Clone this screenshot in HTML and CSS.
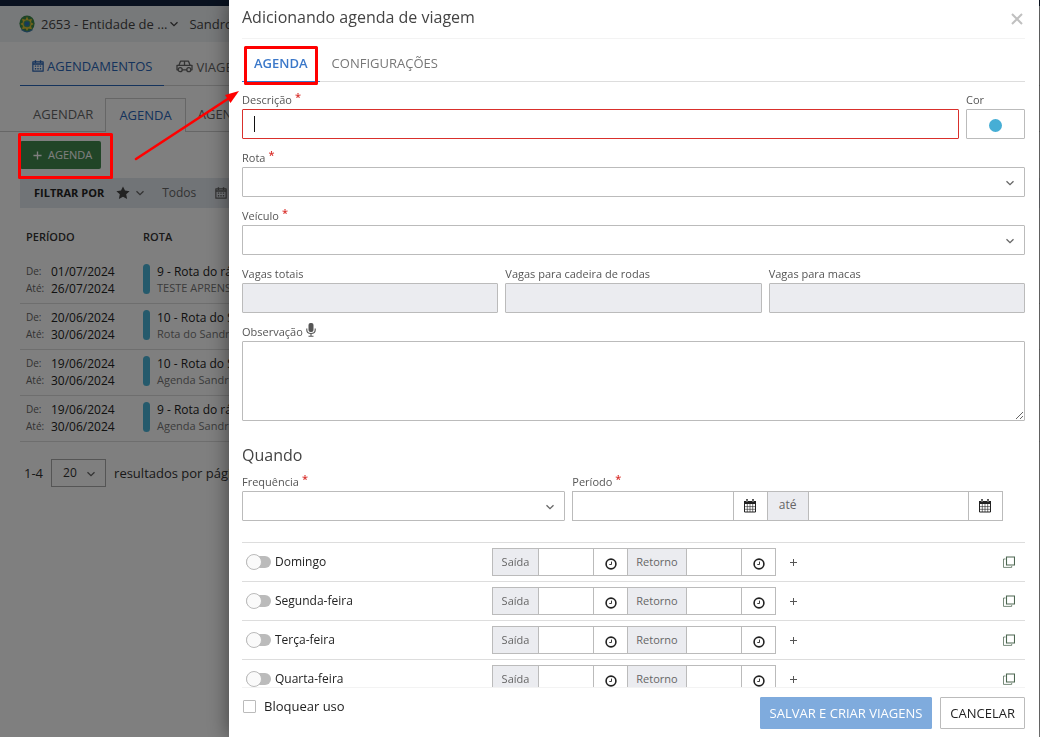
FILE: index.html
```html
<!DOCTYPE html>
<html lang="pt-BR">
<head>
<meta charset="utf-8">
<title>Agenda de viagem</title>
<link rel="stylesheet" href="styles.css">
</head>
<body>
<svg class="sprite" aria-hidden="true">
  <symbol id="chevron" viewBox="0 0 10 10"><path d="M1.5 3.2 5 6.7 8.5 3.2" fill="none" stroke="currentColor" stroke-width="1.3"/></symbol>
  <symbol id="cal" viewBox="0 0 14 14"><path d="M1 2.2h12V13H1z" fill="none" stroke="currentColor" stroke-width="1.4" stroke-linejoin="round"/><path d="M1 4.7h12M4 .4v3M10 .4v3" stroke="currentColor" stroke-width="1.6"/><path d="M3.3 7.2h1.6M6.2 7.2h1.6M9.1 7.2h1.6M3.3 10.2h1.6M6.2 10.2h1.6M9.1 10.2h1.6" stroke="currentColor" stroke-width="1.5"/></symbol>
  <symbol id="calgrid" viewBox="0 0 13 14"><path d="M1 2.5h11V13H1z" fill="#fff" stroke="currentColor"/><path d="M.5 2h12v3H.5z" fill="currentColor"/><path d="M3.5 .3v3M9.5 .3v3" stroke="currentColor" stroke-width="2"/><path d="M3.5 1v2M9.5 1v2" stroke="#fff" stroke-width=".7"/><path d="M3.8 5v8M6.5 5v8M9.2 5v8M1 7.6h11M1 10.3h11" stroke="currentColor" stroke-width=".6"/></symbol>
  <symbol id="clock" viewBox="0 0 12 12"><circle cx="6" cy="6" r="4.9" fill="none" stroke="currentColor" stroke-width="1.6"/><path d="M6.5 3.6v2.900H4.300" fill="none" stroke="currentColor" stroke-width=".9"/></symbol>
  <symbol id="copy" viewBox="0 0 12 12"><path d="M3.5 1h8v8h-8z" fill="none" stroke="currentColor" stroke-width="1.1"/><path d="M2.5 3h-2v8.4h8.2V10" fill="none" stroke="currentColor" stroke-width="1" opacity=".75"/></symbol>
</svg>

<div class="page">
  <div class="topbar"></div>
  <header class="entity">
    <svg class="crest" viewBox="0 0 16 18"><ellipse cx="8" cy="8.500" rx="7.600" ry="8" fill="#3c8a4b"/><path d="m8 1.500 1.500 3.200 3.500-1-1 3.500 2.600 1.800-2.600 1.800 1 3.400-3.500-.8L8 16l-1.500-2.600-3.500.8 1-3.400L1.400 9 4 7.200l-1-3.500 3.500 1z" fill="#e3c432"/><circle cx="8" cy="8.800" r="3.500" fill="#3f9a68"/><circle cx="8" cy="8.800" r="2.300" fill="#2d74b5"/><path d="M2.500 14.500q5.500 4.500 11 0" fill="none" stroke="#3d7fa8" stroke-width="1.500"/></svg>
    <span class="entity-name">2653 - Entidade de ...</span>
    <svg class="chev"><use href="#chevron"/></svg>
    <span class="entity-user">Sandro</span>
  </header>
  <nav class="modules">
    <a class="module active" href="#agendamentos"><svg class="ico12"><use href="#cal"/></svg>AGENDAMENTOS</a>
    <a class="module" href="#viagens"><svg class="car" viewBox="0 0 17 13"><path d="M3 5 4.500 1.200h8L14 5M1 5.300h15v4.500H1zM8.500 1.200V5" fill="none" stroke="currentColor" stroke-width="1.300" stroke-linejoin="round"/><circle cx="4.200" cy="9.700" r="2" fill="#fff" stroke="currentColor" stroke-width="1.300"/><circle cx="12.800" cy="9.700" r="2" fill="#fff" stroke="currentColor" stroke-width="1.300"/></svg>VIAGENS</a>
  </nav>
  <nav class="subtabs">
    <a class="subtab" href="#agendar">AGENDAR</a>
    <a class="subtab active" href="#agenda">AGENDA</a>
    <a class="subtab" href="#lista">AGENDAMENTOS</a>
  </nav>
  <main class="list">
    <button class="add" type="button"><svg class="plus" viewBox="0 0 10 10"><path d="M5 .5v9M.5 5h9" stroke="currentColor" stroke-width="1.500"/></svg>AGENDA</button>
    <div class="filters">
      <strong>FILTRAR POR</strong>
      <svg class="star" viewBox="0 0 14 14"><path d="m7 .4 2 4.200 4.600.6-3.400 3.100.9 4.600L7 10.700l-4.100 2.200.9-4.600L.4 5.200 5 4.600z" fill="currentColor"/></svg>
      <svg class="chev"><use href="#chevron"/></svg>
      <span class="filter-value">Todos</span>
      <svg class="ico12"><use href="#cal"/></svg>
    </div>
    <table class="agendas">
      <thead><tr><th>PERÍODO</th><th>ROTA</th></tr></thead>
      <tbody>
        <tr><td><div class="dates"><small>De:</small><span>01/07/2024</span><small>Até:</small><span>26/07/2024</span></div></td><td><div class="route"><b>9 - Rota do rápido</b><span>TESTE APRENSENTAÇÃO</span></div></td></tr>
        <tr><td><div class="dates"><small>De:</small><span>20/06/2024</span><small>Até:</small><span>30/06/2024</span></div></td><td><div class="route"><b>10 - Rota do Sandro</b><span>Rota do Sandro</span></div></td></tr>
        <tr><td><div class="dates"><small>De:</small><span>19/06/2024</span><small>Até:</small><span>30/06/2024</span></div></td><td><div class="route"><b>10 - Rota do Sandro</b><span>Agenda Sandro</span></div></td></tr>
        <tr><td><div class="dates"><small>De:</small><span>19/06/2024</span><small>Até:</small><span>30/06/2024</span></div></td><td><div class="route"><b>9 - Rota do rápido</b><span>Agenda Sandro</span></div></td></tr>
      </tbody>
    </table>
    <div class="pager">
      <span>1-4</span>
      <span class="select small"><select id="porpagina" aria-label="Resultados por página"><option>20</option></select><svg class="chev"><use href="#chevron"/></svg></span>
      <label for="porpagina">resultados por página</label>
    </div>
  </main>
</div>
<div class="backdrop"></div>

<section class="drawer" role="dialog" aria-labelledby="titulo">
  <header class="drawer-head">
    <h1 id="titulo">Adicionando agenda de viagem</h1>
    <button class="close" type="button" aria-label="Fechar"><svg viewBox="0 0 12 12"><path d="m1 1 10 10M11 1 1 11" stroke="currentColor" stroke-width="2"/></svg></button>
  </header>
  <div class="drawer-body">
    <nav class="tabs">
      <a class="tab active" href="#tab-agenda">AGENDA</a>
      <a class="tab" href="#tab-config">CONFIGURAÇÕES</a>
    </nav>
    <form class="form">
      <div class="row with-color">
        <div class="field"><label for="descricao">Descrição <i>*</i></label><div class="stack"><input class="control invalid" id="descricao" type="text"><span class="caret"></span></div></div>
        <div class="field"><label for="cor">Cor</label><button class="control color" id="cor" type="button" aria-label="Cor"><span></span></button></div>
      </div>
      <div class="field"><label for="rota">Rota <i>*</i></label><div class="select"><select class="control" id="rota"><option></option></select><svg class="chev"><use href="#chevron"/></svg></div></div>
      <div class="field"><label for="veiculo">Veículo <i>*</i></label><div class="select"><select class="control" id="veiculo"><option></option></select><svg class="chev"><use href="#chevron"/></svg></div></div>
      <div class="row thirds">
        <div class="field"><label for="vagas">Vagas totais</label><input class="control" id="vagas" disabled></div>
        <div class="field"><label for="cadeira">Vagas para cadeira de rodas</label><input class="control" id="cadeira" disabled></div>
        <div class="field"><label for="macas">Vagas para macas</label><input class="control" id="macas" disabled></div>
      </div>
      <div class="field"><label for="obs">Observação <svg class="mic" viewBox="0 0 10 14"><rect x="2.500" y="0" width="5" height="9" rx="2" fill="currentColor"/><path d="M.8 5.500V7q0 3.500 4.200 3.500T9.200 7V5.500M5 10.500V13M2.500 13.300h5" fill="none" stroke="currentColor" stroke-width="1.100"/></svg></label><textarea class="control area" id="obs"></textarea></div>
      <h2>Quando</h2>
      <div class="row when">
        <div class="field"><label for="freq">Frequência <i>*</i></label><div class="select"><select class="control" id="freq"><option></option></select><svg class="chev"><use href="#chevron"/></svg></div></div>
        <div class="field"><label for="inicio">Período <i>*</i></label>
          <div class="group period">
            <input id="inicio" type="text"><button type="button" aria-label="Data inicial"><svg class="ico14"><use href="#calgrid"/></svg></button><span class="addon">até</span><input type="text" aria-label="Data final"><button type="button" aria-label="Data final, calendário"><svg class="ico14"><use href="#calgrid"/></svg></button>
          </div>
        </div>
      </div>
      <div class="days">
        <div class="day"><label class="switch"><input type="checkbox"><span>Domingo</span></label>
          <div class="group times"><label class="addon" for="s1">Saída</label><input id="s1"><button type="button" aria-label="Hora de saída"><svg class="ico12"><use href="#clock"/></svg></button><label class="addon" for="r1">Retorno</label><input id="r1"><button type="button" aria-label="Hora de retorno"><svg class="ico12"><use href="#clock"/></svg></button></div>
          <button class="more" type="button" aria-label="Adicionar horário"><svg viewBox="0 0 7 7"><path d="M3.500 0v7M0 3.500h7" stroke="currentColor"/></svg></button><button class="copy" type="button" aria-label="Copiar"><svg class="ico12"><use href="#copy"/></svg></button></div>
        <div class="day"><label class="switch"><input type="checkbox"><span>Segunda-feira</span></label>
          <div class="group times"><label class="addon" for="s2">Saída</label><input id="s2"><button type="button" aria-label="Hora de saída"><svg class="ico12"><use href="#clock"/></svg></button><label class="addon" for="r2">Retorno</label><input id="r2"><button type="button" aria-label="Hora de retorno"><svg class="ico12"><use href="#clock"/></svg></button></div>
          <button class="more" type="button" aria-label="Adicionar horário"><svg viewBox="0 0 7 7"><path d="M3.500 0v7M0 3.500h7" stroke="currentColor"/></svg></button><button class="copy" type="button" aria-label="Copiar"><svg class="ico12"><use href="#copy"/></svg></button></div>
        <div class="day"><label class="switch"><input type="checkbox"><span>Terça-feira</span></label>
          <div class="group times"><label class="addon" for="s3">Saída</label><input id="s3"><button type="button" aria-label="Hora de saída"><svg class="ico12"><use href="#clock"/></svg></button><label class="addon" for="r3">Retorno</label><input id="r3"><button type="button" aria-label="Hora de retorno"><svg class="ico12"><use href="#clock"/></svg></button></div>
          <button class="more" type="button" aria-label="Adicionar horário"><svg viewBox="0 0 7 7"><path d="M3.500 0v7M0 3.500h7" stroke="currentColor"/></svg></button><button class="copy" type="button" aria-label="Copiar"><svg class="ico12"><use href="#copy"/></svg></button></div>
        <div class="day"><label class="switch"><input type="checkbox"><span>Quarta-feira</span></label>
          <div class="group times"><label class="addon" for="s4">Saída</label><input id="s4"><button type="button" aria-label="Hora de saída"><svg class="ico12"><use href="#clock"/></svg></button><label class="addon" for="r4">Retorno</label><input id="r4"><button type="button" aria-label="Hora de retorno"><svg class="ico12"><use href="#clock"/></svg></button></div>
          <button class="more" type="button" aria-label="Adicionar horário"><svg viewBox="0 0 7 7"><path d="M3.500 0v7M0 3.500h7" stroke="currentColor"/></svg></button><button class="copy" type="button" aria-label="Copiar"><svg class="ico12"><use href="#copy"/></svg></button></div>
      </div>
    </form>
  </div>
  <footer class="drawer-foot">
    <label class="block"><input type="checkbox"><span>Bloquear uso</span></label>
    <button class="btn primary" type="button">SALVAR E CRIAR VIAGENS</button>
    <button class="btn" type="button">CANCELAR</button>
  </footer>
</section>

<svg class="notes" viewBox="0 0 330 190" aria-hidden="true">
  <g fill="none" stroke="#f00" stroke-width="3" stroke-linejoin="round">
    <rect x="19.500" y="134.500" width="92" height="43"/>
    <rect x="245.500" y="47.500" width="71" height="36"/>
    <path d="m136 159 94-61.500" stroke-width="2.600" stroke-linecap="round"/>
  </g>
  <path d="m239 91-8.500 12-5.500-8z" fill="#f00"/>
</svg>
</body>
</html>
```

FILE: styles.css
```css
* { box-sizing: border-box; }
html, body { height: 100%; }
body { margin: 0; overflow: hidden; background: #fff; color: #333; font: 12px/16px "Open Sans", "Noto Sans", sans-serif; }
input, select, textarea, button { font: inherit; color: inherit; margin: 0; border-radius: 0; }
button { display: flex; align-items: center; justify-content: center; padding: 0; border: 0; background: none; }
a { color: inherit; text-decoration: none; }
svg { display: block; flex: none; }
.sprite { position: absolute; width: 0; height: 0; }
.chev { width: 10px; height: 10px; }
.ico14 { width: 14px; height: 14px; }
.ico12 { width: 12px; height: 12px; }

/* Page behind the drawer */
.page { min-height: 100%; white-space: nowrap; }
.topbar { height: 6px; background: #12233f; }
.entity { display: flex; align-items: center; height: 36px; padding-left: 19px; background: #eff2f5; font-size: 13px; color: #444; }
.crest { width: 16px; height: 18px; margin-right: 6px; }
.entity-name { margin-right: 2px; }
.entity-user { margin-left: 10px; }
.modules { display: flex; height: 44px; margin-left: 20px; padding-top: 7px; border-bottom: 1px solid #d5d5d5; font-size: 13px; color: #666; }
.module { display: flex; align-items: center; gap: 3px; height: 37px; padding: 0 12px 2px; }
.module.active { color: #2a66b8; font-weight: 500; border-bottom: 1px solid #2a66b8; }
.car { width: 17px; height: 13px; }
.subtabs { display: flex; height: 46px; padding: 12px 0 0 20px; border-bottom: 1px solid #ccc; font-size: 13px; color: #666; }
.subtab { display: flex; align-items: center; height: 34px; padding: 0 12px 3px; }
.subtab:first-child { padding-left: 13px; }
.subtab.active { padding: 0 13px 2px; color: #2a66b8; font-weight: 500; background: #fff; border: 1px solid #ccc; border-bottom: 0; }
.list { padding: 9px 0 0 20px; }
.add { justify-content: flex-start; gap: 6px; width: 81px; height: 28px; padding-left: 13px; border-radius: 2px; background: #438a4e; color: #fff; font-size: 11px; }
.plus { width: 9px; height: 9px; }
.filters { display: flex; align-items: center; height: 30px; margin-top: 9px; padding-left: 14px; background: #e3e8ee; font-size: 12px; color: #666; }
.filters strong { margin-right: 12px; font-size: 11px; color: #222; }
.star { width: 14px; height: 14px; margin-right: 5px; color: #444; }
.filter-value { margin: 0 19px 0 17px; }
.agendas { width: 100%; border-collapse: collapse; table-layout: fixed; }
.agendas th { width: 117px; height: 49px; padding: 9px 6px 1px; text-align: left; font-size: 11px; font-weight: 600; color: #333; }
.agendas th + th { width: auto; }
.agendas td { height: 46px; padding: 0 6px; border-bottom: 1px solid #ddd; }
.dates { display: grid; grid-template-columns: 25px auto; line-height: 17px; color: #222; }
.dates small { font-size: 10px; color: #666; }
.route { display: grid; grid-template-columns: 7px 1fr; column-gap: 7px; max-width: 92px; overflow: hidden; color: #222; }
.route::before { content: ""; grid-row: 1 / 3; height: 30px; border-radius: 4px; background: #4bb5d8; }
.route b { font-weight: 400; }
.route span { font-size: 11px; color: #777; }
.pager { display: flex; align-items: center; gap: 8px; margin-top: 17px; padding-left: 4px; font-size: 13px; }
.small select { width: 55px; height: 28px; padding-left: 11px; border: 1px solid #aaa; background: none; appearance: none; font-size: 12px; }
.backdrop { position: fixed; inset: 0; background: rgba(0, 0, 0, .5); }

/* Drawer */
.drawer { position: fixed; inset: 0 1px 0 229px; display: flex; flex-direction: column; padding: 0 14px 0 13px; background: #fff; box-shadow: 0 0 20px rgba(0, 0, 0, .5); }
.drawer-head { display: flex; align-items: center; justify-content: space-between; height: 39px; padding-bottom: 4px; border-bottom: 1px solid #f3f3f3; flex: none; }
h1, h2 { margin: 0; font-size: 16px; font-weight: 400; line-height: 20px; color: #444; }
.close { height: 20px; padding: 4px 2px 0; color: #c0c0c0; }
.close svg { width: 12px; height: 12px; }
.drawer-body { flex: 1; min-height: 0; overflow-y: auto; scrollbar-width: none; }
.tabs { display: flex; height: 43px; padding-top: 7px; border-bottom: 1px solid #ddd; font-size: 13px; color: #777; }
.tab { display: flex; align-items: center; height: 36px; padding: 0 12px 2px; }
.tab.active { color: #3b78c9; font-weight: 600; border-bottom: 1px solid #3b78c9; padding-bottom: 1px; }
.form { display: flex; flex-direction: column; gap: 10px; padding-top: 9px; }
.row { display: grid; gap: 7px; }
.with-color { grid-template-columns: 1fr 59px; }
.thirds { grid-template-columns: repeat(3, 1fr); }
.when { grid-template-columns: 5fr 7fr; }
.field { min-width: 0; }
.field > label { display: flex; align-items: center; gap: 3px; height: 18px; font-size: 11px; font-weight: 500; color: #555; white-space: nowrap; }
.field i { align-self: flex-start; line-height: 11px; font-style: normal; font-weight: 600; font-size: 11px; color: #d9302c; }
.mic { width: 10px; height: 14px; color: #555; margin-bottom: 4px; }
.control { display: block; width: 100%; height: 30px; padding: 0 12px; border: 1px solid #bbb; border-radius: 1px; background: #fff; appearance: none; outline: 0; }
.control:disabled { background: #ebecf0; }
.invalid { border-color: #d9302c; }
.area { height: 80px; resize: vertical; }
.stack, .select { display: grid; align-items: center; }
.stack > *, .select > * { grid-area: 1 / 1; }
.caret { width: 1px; height: 16px; margin-left: 12px; background: #111; }
.select .chev { justify-self: end; margin: 2px 10px 0 0; color: #666; pointer-events: none; }
.color { display: flex; }
.color span { width: 13px; height: 13px; margin-top: 2px; border-radius: 50%; background: #46aed5; }
h2 { margin: 14px 0 -2px; }
.group { display: flex; color: #222; }
.group > * { border: 1px solid #bbb; background: #fff; }
.group > * + * { border-left: 0; }
.group input { min-width: 0; outline: 0; }
.group button { width: 34px; flex: none; }
.group .addon { display: flex; align-items: center; justify-content: center; background: #ebecf0; color: #666; flex: none; }
.period { height: 30px; margin-right: 22px; }
.period input { flex: 1; }
.period .addon { width: 41px; padding-bottom: 2px; }
.days { margin-top: 11px; }
.day { display: grid; grid-template-columns: minmax(0, 250px) auto 34px 1fr; align-items: center; height: 39px; border-top: 1px solid #ddd; }
.switch { display: flex; align-items: center; gap: 4px; padding-left: 4px; color: #222; }
.switch input { display: flex; align-items: center; width: 25px; height: 12px; border-radius: 6px; background: #bbb; appearance: none; }
.switch input::before { content: ""; flex: none; width: 14px; height: 14px; border: 1px solid #bbb; border-radius: 50%; background: #fafafa; }
.times { height: 28px; font-size: 11px; }
.times input { width: 55px; }
.times .addon { width: 47px; }
.times input ~ .addon { width: 59px; }
.times svg { margin-top: 3px; }
.more { height: 20px; color: #555; }
.more svg { width: 7px; height: 7px; }
.copy { justify-self: end; width: 12px; height: 20px; margin-right: 10px; color: #4c6650; }
.drawer-foot { display: flex; align-items: flex-start; gap: 8px; height: 50px; padding-top: 9px; border-top: 1px solid #f3f3f3; flex: none; font-size: 13px; color: #222; }
.block { display: flex; align-items: center; gap: 8px; margin-right: auto; padding: 1px 0 0 1px; }
.block input { width: 13px; height: 13px; border: 1px solid #bbb; border-radius: 1px; background: #fff; appearance: none; }
.btn { height: 32px; padding: 0 9px; border: 1px solid #bbb; border-radius: 1px; background: #fff; white-space: nowrap; }
.primary { border-color: #7fabdd; background: #7fabdd; color: #fff; }

/* Callouts drawn over the interface */
.notes { position: absolute; top: 0; left: 0; width: 330px; height: 190px; pointer-events: none; }
```
